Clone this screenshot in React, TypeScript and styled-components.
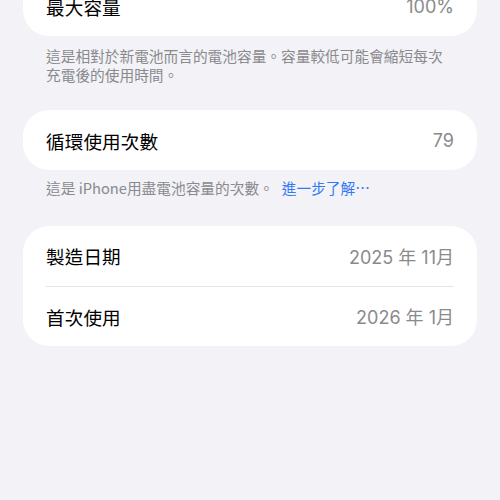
import React from "react";
import styled, { createGlobalStyle } from "styled-components";

const Global = createGlobalStyle`
  html, body { margin: 0; padding: 0; background: #f2f2f7; }
  body {
    font-family: Inter, "Noto Sans CJK TC", "Noto Sans", sans-serif;
    -webkit-font-smoothing: antialiased;
  }
`;

const Page = styled.div`
  height: 500px;
  overflow: hidden;
  padding: 0 23px;
  box-sizing: border-box;
  display: flex;
  flex-direction: column;
`;

const Card = styled.div<{ $top: number }>`
  margin-top: ${(p) => p.$top}px;
  background: #ffffff;
  border-radius: 26px;
  padding: 0 23px;
  display: flex;
  flex-direction: column;
`;

const Row = styled.div<{ $divider?: boolean }>`
  height: 60px;
  display: flex;
  align-items: center;
  justify-content: space-between;
  box-sizing: border-box;
  border-top: ${(p) => (p.$divider ? "1px solid #e4e4e9" : "none")};
`;

const Label = styled.span`
  font-family: "Noto Sans CJK TC", sans-serif;
  font-size: 18.6px;
  color: #000;
  letter-spacing: 0.1px;
`;

const Value = styled.span`
  font-family: Inter, "Noto Sans CJK TC", sans-serif;
  font-size: 18px;
  color: #8a8a8e;
`;

const Footer = styled.p<{ $top: number }>`
  margin: ${(p) => p.$top}px 0 0;
  padding: 0 23px;
  font-family: "Noto Sans CJK TC", sans-serif;
  font-size: 14.7px;
  line-height: 18.5px;
  color: #8a8a8e;
`;

const Link = styled.span`
  color: #3478f6;
  margin-left: 8px;
`;

export default function App() {
  return (
    <>
      <Global />
      <Page>
        <Card $top={-24}>
          <Row>
            <Label>最大容量</Label>
            <Value>100%</Value>
          </Row>
        </Card>
        <Footer $top={11}>
          這是相對於新電池而言的電池容量。容量較低可能會縮短每次充電後的使用時間。
        </Footer>
        <Card $top={26}>
          <Row>
            <Label>循環使用次數</Label>
            <Value>79</Value>
          </Row>
        </Card>
        <Footer $top={9}>
          這是 iPhone用盡電池容量的次數。
          <Link>進一步了解⋯</Link>
        </Footer>
        <Card $top={28}>
          <Row>
            <Label>製造日期</Label>
            <Value>2025 年 11月</Value>
          </Row>
          <Row $divider>
            <Label>首次使用</Label>
            <Value>2026 年 1月</Value>
          </Row>
        </Card>
      </Page>
    </>
  );
}
